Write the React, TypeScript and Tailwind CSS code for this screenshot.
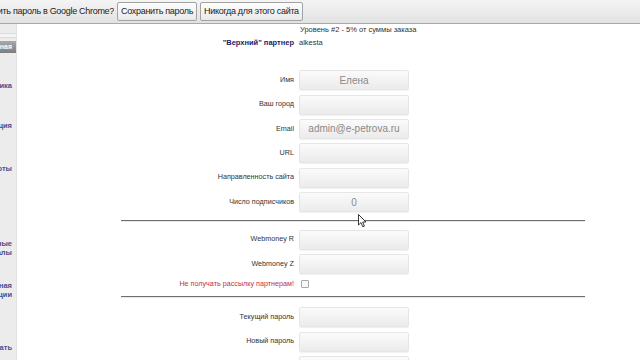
import React from 'react';

const font = { fontFamily: '"Liberation Sans", Arial, sans-serif' };

interface Row {
    label: string;
    value?: string;
}

const profileRows: Row[] = [
    { label: 'Имя', value: 'Елена' },
    { label: 'Ваш город' },
    { label: 'Email', value: 'admin@e-petrova.ru' },
    { label: 'URL' },
    { label: 'Направленность сайта' },
    { label: 'Число подписчиков', value: '0' },
];

const sideItems = [
    { top: 'Статистика', bottom: '', mt: 'mt-[28px]' },
    { top: 'Регистрация', bottom: '', mt: 'mt-[31px]' },
    { top: 'Работы', bottom: '', mt: 'mt-[34px]' },
    { top: 'Рекламные', bottom: 'материалы', mt: 'mt-[66px]' },
    { top: 'Личная', bottom: 'инструкции', mt: 'mt-[24px]' },
    { top: 'Написать', bottom: '', mt: 'mt-[44px]' },
];

function Field({ label, value }: Row) {
    return (
        <div className="flex items-center h-[24.4px]">
            <div className="w-[282px] pr-[5px] text-right text-[7.2px] text-[#333]">{label}</div>
            <div className="w-[110px] h-[20px] rounded-[2px] border border-[#e6e6e6] bg-[linear-gradient(to_bottom,#fbfbfb,#ebebeb)] shadow-[0_1px_1px_rgba(0,0,0,0.06)] flex items-center justify-center text-[10px] text-[#8a8a8a]">
                {value}
            </div>
        </div>
    );
}

function Divider() {
    return <div className="ml-[104px] w-[464px] h-[1px] bg-[#6f6f6f] border-b border-[#e8e8e8] box-content"></div>;
}

export default function App() {
    return (
        <div className="w-[640px] h-[360px] overflow-hidden bg-white relative" style={font}>
            {/* Chrome infobar */}
            <div className="h-[24px] bg-[linear-gradient(to_bottom,#f4f4f4,#e2e2e2)] border-b border-[#a9a9a9] flex items-center text-[9px] tracking-[-0.3px] text-[#222]">
                <div className="w-[114px] overflow-hidden flex justify-end whitespace-nowrap">
                    <span className="shrink-0">Сохранить пароль в Google Chrome?</span>
                </div>
                <button className="ml-[3px] h-[19px] px-[3px] border border-[#a3a3a3] rounded-[2px] bg-[linear-gradient(to_bottom,#fdfdfd,#e9e9e9)]">Сохранить пароль</button>
                <button className="ml-[3px] h-[19px] px-[3px] border border-[#a3a3a3] rounded-[2px] bg-[linear-gradient(to_bottom,#fdfdfd,#e9e9e9)]">Никогда для этого сайта</button>
            </div>

            <div className="flex">
                {/* Sidebar */}
                <div className="w-[17px] h-[336px] bg-[#ececec] border-r border-[#e2e2e2] shrink-0 flex flex-col">
                    <div className="mt-[9px] h-[5px] bg-[#f5f5f5] border-y border-[#dcdcdc]"></div>
                    <div className="mt-[3px] h-[12px] pr-[4px] bg-[linear-gradient(to_bottom,#a9a9a9,#7d7d7d)] flex justify-end overflow-hidden whitespace-nowrap text-[7px] text-white font-bold leading-[12px]">
                        <span className="shrink-0">Главная</span>
                    </div>
                    {sideItems.map(item => (
                        <div key={item.top} className={`${item.mt} pr-[4px] flex flex-col items-end overflow-hidden whitespace-nowrap text-[7.5px] font-bold text-[#4d4d8f] leading-[9px]`}>
                            <span className="shrink-0">{item.top}</span>
                            {item.bottom && <span className="shrink-0">{item.bottom}</span>}
                        </div>
                    ))}
                </div>

                {/* Main */}
                <div className="flex-1 flex flex-col">
                    <div className="flex items-center h-[11px]">
                        <div className="w-[282px]"></div>
                        <div className="pl-[1px] text-[7.5px] text-[#333]">Уровень #2 - 5% от суммы заказа</div>
                    </div>
                    <div className="flex items-center h-[13px] mt-[1px]">
                        <div className="w-[282px] pr-[5px] text-right text-[7.5px] font-bold text-[#1f2167]">"Верхний" партнер</div>
                        <div className="text-[7.5px] text-[#333]">alkesta</div>
                    </div>

                    <div className="mt-[19px] flex flex-col">
                        {profileRows.map(r => <Field key={r.label} {...r} />)}
                    </div>

                    <div className="mt-[6px]"><Divider /></div>

                    <div className="mt-[5px] flex flex-col">
                        <Field label="Webmoney R" />
                        <Field label="Webmoney Z" />
                    </div>

                    <div className="flex items-center h-[14px] mt-[1px]">
                        <div className="w-[282px] pr-[5px] text-right text-[7.2px] text-[#c4303f]">Не получать рассылку партнерам!</div>
                        <div className="ml-[2px] w-[8px] h-[8px] border border-[#a8a8a8] rounded-[1px] bg-[#f8f8f8]"></div>
                    </div>

                    <div className="mt-[5px]"><Divider /></div>

                    <div className="mt-[7px] flex flex-col">
                        <Field label="Текущий пароль" />
                        <Field label="Новый пароль" />
                        <Field label="" />
                    </div>
                </div>
            </div>

            {/* mouse cursor */}
            <svg className="absolute left-[358px] top-[214px]" width="9" height="14" viewBox="0 0 9 14">
                <path d="M0.5 0.5 L0.5 11 L3 8.6 L4.8 12.8 L6.4 12.1 L4.7 8 L8 8 Z" fill="white" stroke="#222" strokeWidth="0.9" strokeLinejoin="round" />
            </svg>
        </div>
    );
}
